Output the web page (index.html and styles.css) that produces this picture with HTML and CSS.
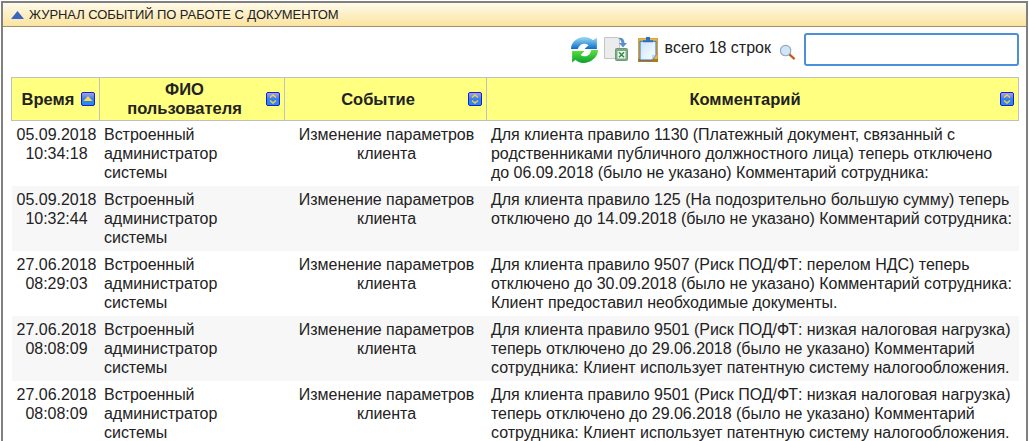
FILE: index.html
```html
<!DOCTYPE html>
<html lang="ru">
<head>
<meta charset="UTF-8" />
<meta name="viewport" content="width=device-width, initial-scale=1" />
<title>Журнал событий</title>
<link rel="stylesheet" href="styles.css">
</head>
<body>
<svg class="defs" width="0" height="0" aria-hidden="true">
  <defs>
    <linearGradient id="btn" x1="0" y1="0" x2="0" y2="1">
      <stop offset="0" stop-color="#a9a6e0" />
      <stop offset="0.5" stop-color="#3a7fe8" />
      <stop offset="1" stop-color="#1e90f0" />
    </linearGradient>
    <linearGradient id="blue" x1="0" y1="0" x2="0" y2="1">
      <stop offset="0" stop-color="#a0dcf4" />
      <stop offset="1" stop-color="#0a70c8" />
    </linearGradient>
    <linearGradient id="green" x1="0" y1="0" x2="0" y2="1">
      <stop offset="0" stop-color="#60e040" />
      <stop offset="1" stop-color="#08a030" />
    </linearGradient>
    <linearGradient id="sheet" x1="0" y1="0" x2="1" y2="1">
      <stop offset="0" stop-color="#c8e4fa" />
      <stop offset="1" stop-color="#ffffff" />
    </linearGradient>
    <symbol id="sort-both" viewBox="0 0 14 14">
      <rect x="0.5" y="0.5" width="13" height="13" rx="1.5" fill="url(#btn)" stroke="#1a1ad8" />
      <path d="M4 5.5 7 3l3 2.5M4 8.5 7 11l3-2.5" fill="none" stroke="#f5d040" stroke-width="1.4" />
    </symbol>
    <symbol id="sort-up" viewBox="0 0 14 14">
      <rect x="0.5" y="0.5" width="13" height="13" rx="1.5" fill="url(#btn)" stroke="#1a1ad8" />
      <path d="M2.5 9 7 4l4.500 5z" fill="#f8d850" />
    </symbol>
  </defs>
</svg>

<div class="panel">
  <div class="panel-head">
    <svg class="collapse" width="13" height="8" viewBox="0 0 13 8"><path d="M0 8 6.500 0 13 8z" fill="#3a66c8" /></svg>
    ЖУРНАЛ СОБЫТИЙ ПО РАБОТЕ С ДОКУМЕНТОМ
  </div>

  <div class="panel-body">
    <div class="toolbar">
      <svg class="tool" width="27" height="26" viewBox="1 1 24 24" preserveAspectRatio="none">
        <path d="M1 12C1 5 8 .5 14 1c3 .3 5 1.500 6.500 3L24 1.500V12H13l3.500-3.500C14 6.500 10 6.500 8 10l-1 2z" fill="url(#blue)" />
        <path d="M25 13c0 7-7 12-13 12-3 0-5.500-1.500-7-3L2 24.500V14h11l-3.500 3.500c2.500 2 6.500 2 8.500-1.500l1-3z" fill="url(#green)" />
      </svg>
      <svg class="tool tool-xls" width="24" height="24" viewBox="0 0 24 24">
        <path d="M.5.500h13l2 2v19H.5z" fill="#ececec" stroke="#c4c4c4" />
        <path d="M14 1c4-1 6.500 1 6.500 5H23l-4 4.500L15 6h2.500c0-2-1.500-4-3.500-5z" fill="#5a90c8" />
        <rect x="11.500" y="11.500" width="12" height="12" rx="1" fill="#7fa886" stroke="#6f9a70" />
        <rect x="13.500" y="14" width="8" height="7.500" fill="#f4f8f2" />
        <path d="M15 15.200l5 5m0-5-5 5" stroke="#2f8f45" stroke-width="1.600" />
      </svg>
      <svg class="tool tool-clip" width="20" height="25" viewBox="0 0 20 24" preserveAspectRatio="none">
        <rect x="0.500" y="1.500" width="19" height="22" fill="#f4b840" stroke="#d8a030" />
        <path d="M0 21h20v3H0z" fill="#b07a18" />
        <path d="M2 4h16v13l-4 5H2z" fill="url(#sheet)" stroke="#2a70c8" />
        <path d="M14 22v-5h4z" fill="#b8d8f4" />
        <path d="M8 0h4v3h3v2H5V3h3z" fill="#2a70c8" />
      </svg>
      <span class="count">всего 18 строк</span>
      <svg class="lens" width="17" height="17" viewBox="0 0 18 18">
        <circle cx="7" cy="7" r="5.500" fill="#cfe6f8" stroke="#8fa8bc" stroke-width="1.200" />
        <path d="M11 11l5.500 5" stroke="#c85a20" stroke-width="2.400" />
      </svg>
      <input class="search" type="text" />
    </div>

    <table class="events">
      <colgroup>
        <col class="c-time" /><col class="c-user" /><col class="c-event" /><col />
      </colgroup>
      <thead>
        <tr>
          <th><div class="th-in"><span class="th-label">Время</span><svg class="sort" width="14" height="14"><use href="#sort-up" /></svg></div></th>
          <th><div class="th-in"><span class="th-label">ФИО<br />пользователя</span><svg class="sort" width="14" height="14"><use href="#sort-both" /></svg></div></th>
          <th><div class="th-in"><span class="th-label">Событие</span><svg class="sort" width="14" height="14"><use href="#sort-both" /></svg></div></th>
          <th><div class="th-in"><span class="th-label">Комментарий</span><svg class="sort" width="14" height="14"><use href="#sort-both" /></svg></div></th>
        </tr>
      </thead>
      <tbody>
        <tr>
          <td class="mid">05.09.2018<br />10:34:18</td>
          <td class="user">Встроенный администратор системы</td>
          <td class="mid">Изменение параметров клиента</td>
          <td class="note">Для клиента правило 1130 (Платежный документ, связанный с родственниками публичного должностного лица) теперь отключено до 06.09.2018 (было не указано) Комментарий сотрудника:</td>
        </tr>
        <tr>
          <td class="mid">05.09.2018<br />10:32:44</td>
          <td class="user">Встроенный администратор системы</td>
          <td class="mid">Изменение параметров клиента</td>
          <td class="note">Для клиента правило 125 (На подозрительно большую сумму) теперь отключено до 14.09.2018 (было не указано) Комментарий сотрудника:</td>
        </tr>
        <tr>
          <td class="mid">27.06.2018<br />08:29:03</td>
          <td class="user">Встроенный администратор системы</td>
          <td class="mid">Изменение параметров клиента</td>
          <td class="note">Для клиента правило 9507 (Риск ПОД/ФТ: перелом НДС) теперь отключено до 30.09.2018 (было не указано) Комментарий сотрудника: Клиент предоставил необходимые документы.</td>
        </tr>
        <tr>
          <td class="mid">27.06.2018<br />08:08:09</td>
          <td class="user">Встроенный администратор системы</td>
          <td class="mid">Изменение параметров клиента</td>
          <td class="note">Для клиента правило 9501 (Риск ПОД/ФТ: низкая налоговая нагрузка) теперь отключено до 29.06.2018 (было не указано) Комментарий сотрудника: Клиент использует патентную систему налогообложения.</td>
        </tr>
        <tr>
          <td class="mid">27.06.2018<br />08:08:09</td>
          <td class="user">Встроенный администратор системы</td>
          <td class="mid">Изменение параметров клиента</td>
          <td class="note">Для клиента правило 9501 (Риск ПОД/ФТ: низкая налоговая нагрузка) теперь отключено до 29.06.2018 (было не указано) Комментарий сотрудника: Клиент использует патентную систему налогообложения.</td>
        </tr>
      </tbody>
    </table>
  </div>
</div>
</body>
</html>
```

FILE: styles.css
```css
html, body {
  height: 100%;
  overflow: hidden;
}
body {
  margin: 0;
  padding: 1px 1px 0 1px;
  box-sizing: border-box;
  font-family: "Liberation Sans", Arial, sans-serif;
  font-size: 16px;
  color: #222;
  background: #fff;
}
.defs {
  display: block;
  height: 0;
}
.panel {
  border: 2px solid #808080;
  border-bottom: none;
  background: #fff;
}
.panel-head {
  display: flex;
  align-items: center;
  gap: 5px;
  height: 23px;
  padding-left: 8px;
  font-size: 13px;
  letter-spacing: -0.08px;
  color: #222;
  background: linear-gradient(#fffbea, #fbe3a0);
  border-bottom: 1px solid #a09070;
}
.panel-body {
  padding: 6px 7px 0 8px;
}
.toolbar {
  display: flex;
  justify-content: flex-end;
  align-items: flex-start;
  height: 44px;
}
.tool {
  margin-top: 4px;
  margin-right: 6px;
}
.tool-xls {
  margin-right: 10px;
}
.tool-clip {
  margin-right: 7px;
}
.count {
  margin-top: 6px;
  margin-right: 8px;
}
.lens {
  margin-top: 11px;
  margin-right: 8px;
}
.search {
  width: 215px;
  height: 33px;
  box-sizing: border-box;
  border: 2px solid #4a90d9;
  border-radius: 3px;
  padding: 2px 6px;
  font: inherit;
  outline: none;
}
.events {
  width: 1008px;
  table-layout: fixed;
  border-collapse: collapse;
}
.c-time { width: 88px; }
.c-user { width: 185px; }
.c-event { width: 202px; }
.events th {
  height: 42px;
  padding: 0 4px 0 5px;
  background: #ffff80;
  border: 1px solid #c0c0c0;
  font-size: 16.5px;
  font-weight: 700;
  line-height: 19px;
}
.th-in {
  display: flex;
  align-items: center;
}
.th-label {
  flex: 1;
  text-align: center;
}
.sort {
  flex: none;
  margin-left: 2px;
}
.events td {
  height: 65px;
  box-sizing: border-box;
  padding: 4px 3px 4px 5px;
  vertical-align: top;
  line-height: 19px;
  letter-spacing: -0.03px;
}
.events td.user {
  padding-left: 4.5px;
}
.events td.note {
  padding-left: 4.5px;
  padding-right: 6px;
}
.events tbody tr:nth-child(even) td {
  background: #f7f7f7;
}
.events td.mid {
  text-align: center;
}
```
